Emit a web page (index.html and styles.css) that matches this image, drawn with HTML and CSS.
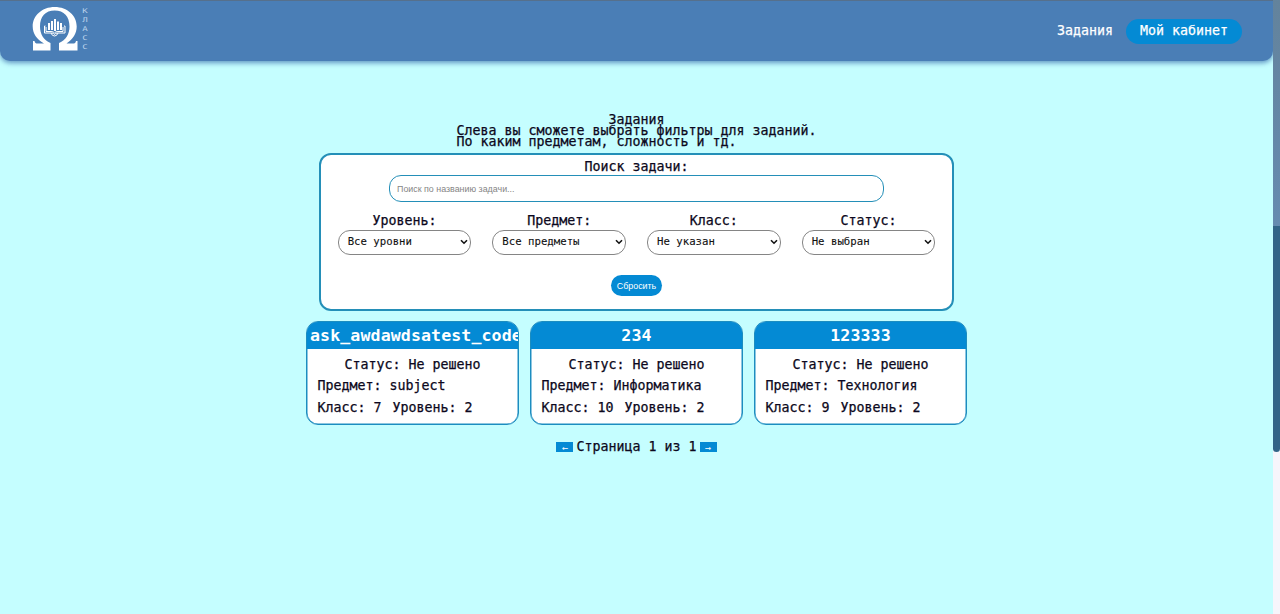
FILE: index.html
```html
<!DOCTYPE html>
<html lang="ru">
<head>
<meta charset="utf-8">
<title>Задания</title>
<link rel="stylesheet" href="styles.css">
</head>
<body>
<div class="page">
  <header class="header">
    <a class="logo">
      <svg class="omega" viewBox="0 0 46 44" width="46" height="44">
        <path fill="#fff" d="M1 43.500V34h1.500C3 36 3.500 36.500 6 36.500H12C4.500 32 .7 26.500 .7 19.500C.7 8.500 10 0 22.700 0S44.700 8.500 44.700 19.500C44.700 26.500 41 32 34.500 36.500H40.500C43 36.500 43.500 36 44 34H45.500V43.500H27V36C34 33 37.500 27 37.500 19.500C37.500 9.500 32 3.500 22.700 3.500S8 9.500 8 19.500C8 27 11.500 33 18.500 36V43.500Z"/>
        <path fill="#fff" d="M16 16h2v7h-2zM19 14h2v9h-2zM22 12h2v12h-2zM25 14.500h2v8.500h-2zM28 16h2v7h-2z"/>
        <path fill="none" stroke="#fff" stroke-width="1" d="M13.500 19h-1v7h7q2 0 3 1.500q1-1.500 3-1.500h7.500v-7h-1M14 20v4.500h5q2.500 0 3.500 1.500q1-1.500 3.500-1.500h5V20M19 26q1 3 3.500 3t3.500-3"/>
      </svg>
      <span class="logo-word"><i>К</i><i>Л</i><i>А</i><i>С</i><i>С</i></span>
    </a>
    <nav class="nav"><a>Задания</a><a class="cabinet">Мой кабинет</a></nav>
  </header>
  <main class="main">
    <div class="intro"><h1>Задания</h1><p>Слева вы сможете выбрать фильтры для заданий.<br>По каким предметам, сложность и тд.</p></div>
    <form class="filters">
      <label class="search-label">Поиск задачи:</label>
      <input class="search" type="text" placeholder="Поиск по названию задачи...">
      <div class="selects">
        <div class="field"><label>Уровень:</label><div class="select">Все уровни<svg width="8" height="6" viewBox="0 0 8 6"><path d="M1 1.200 4 4.200 7 1.200"/></svg></div></div>
        <div class="field"><label>Предмет:</label><div class="select">Все предметы<svg width="8" height="6" viewBox="0 0 8 6"><path d="M1 1.200 4 4.200 7 1.200"/></svg></div></div>
        <div class="field"><label>Класс:</label><div class="select">Не указан<svg width="8" height="6" viewBox="0 0 8 6"><path d="M1 1.200 4 4.200 7 1.200"/></svg></div></div>
        <div class="field"><label>Статус:</label><div class="select">Не выбран<svg width="8" height="6" viewBox="0 0 8 6"><path d="M1 1.200 4 4.200 7 1.200"/></svg></div></div>
      </div>
      <button class="reset" type="button">Сбросить</button>
    </form>
    <section class="cards">
      <article class="card"><h2><span>ask_awdawdsatest_code</span></h2><div class="info"><p class="status">Статус: Не решено</p><p>Предмет: subject</p><p class="pair"><span>Класс: 7</span><span>Уровень: 2</span></p></div></article>
      <article class="card"><h2><span>234</span></h2><div class="info"><p class="status">Статус: Не решено</p><p>Предмет: Информатика</p><p class="pair"><span>Класс: 10</span><span>Уровень: 2</span></p></div></article>
      <article class="card"><h2><span>123333</span></h2><div class="info"><p class="status">Статус: Не решено</p><p>Предмет: Технология</p><p class="pair"><span>Класс: 9</span><span>Уровень: 2</span></p></div></article>
    </section>
    <div class="pager"><button type="button">←</button><span>Страница 1 из 1</span><button type="button">→</button></div>
  </main>
</div>
<div class="scrollbar"><div class="thumb"></div></div>
</body>
</html>
```
FILE: styles.css
```css
* { box-sizing: border-box; }
body {
  margin: 0;
  height: 614px;
  display: flex;
  overflow: hidden;
  background: #c5feff;
  color: #0c0820;
  font: 13.300px/16px "DejaVu Sans Mono", monospace;
  -webkit-text-stroke: 0.25px currentColor;
}
h1, h2, p { margin: 0; font: inherit; }
.page { width: 1273px; }
.header {
  height: 61px;
  padding: 0 31px 0 32px;
  display: flex;
  align-items: center;
  justify-content: space-between;
  background: #4a7eb6;
  border-top: 1px solid #56708c;
  border-radius: 0 0 10px 10px;
  box-shadow: 0 2px 5px #4a7eb6d0;
  color: #fff;
}
.logo { display: flex; gap: 5px; margin-top: -3px; }
.omega { display: block; }
.logo-word { display: flex; flex-direction: column; color: #b9d0ea; -webkit-text-stroke: 0; }
.logo-word i { font: 6.500px/9px "DejaVu Sans Mono", monospace; transform: scaleX(1.400); }
.nav { display: flex; align-items: center; gap: 13px; }
.cabinet {
  height: 25px;
  padding: 0 14px;
  line-height: 24px;
  border-radius: 13px;
  background: #048ad4;
}
.main { padding-top: 53px; display: flex; flex-direction: column; align-items: center; }
.intro { line-height: 11px; }
.intro h1 { text-align: center; }
.filters {
  width: 635px;
  height: 158px;
  margin-top: 6px;
  padding-top: 4px;
  border: 2px solid #248fb8;
  border-radius: 12px;
  background: #fff;
  display: flex;
  flex-direction: column;
  align-items: center;
}
.search-label { height: 16px; }
.search {
  width: 495px;
  height: 27px;
  padding: 0 7px;
  border: 1px solid #248fb8;
  border-radius: 12px;
  outline: none;
  font: 8.900px "Liberation Sans", sans-serif;
  -webkit-text-stroke: 0;
}
.search::placeholder { color: #858585; }
.selects { display: flex; gap: 21px; margin-top: 11px; }
.field { width: 133.700px; text-align: center; }
.field label { display: block; height: 17px; }
.select {
  height: 25px;
  padding: 0 2px 2px 9px;
  display: flex;
  align-items: center;
  justify-content: space-between;
  border: 1px solid #858585;
  border-radius: 12px;
  font-size: 10.700px;
  color: #111;
  -webkit-text-stroke: 0.1px;
}
.select svg { fill: none; stroke: #111; stroke-width: 1.600; }
.reset {
  width: 51px;
  height: 21px;
  margin-top: 20px;
  padding: 0;
  border: 0;
  border-radius: 11px;
  background: #048ad4;
  color: #fff;
  font: 8.900px "Liberation Sans", sans-serif;
  -webkit-text-stroke: 0;
}
.cards { display: flex; gap: 11px; margin-top: 10px; }
.card {
  width: 213px;
  height: 104px;
  border: 1px solid #1c8dc0;
  border-radius: 12px;
  overflow: hidden;
  background: #fff;
  box-shadow: inset 0 0 0 0.5px #1c8dc0;
}
.card h2 {
  height: 27px;
  display: flex;
  justify-content: center;
  background: #048ad4;
  color: #fff;
  font: bold 16.600px/27px "DejaVu Sans Mono", monospace;
  -webkit-text-stroke: 0;
  letter-spacing: 0.1px;
}
.card:first-child h2 { justify-content: flex-start; padding-left: 3px; }
.info { padding: 8px 10.500px 0; }
.info p { height: 21.300px; }
.info .status { text-align: center; }
.info .pair { display: flex; gap: 11px; }
.pager { display: flex; align-items: center; gap: 3px; margin-top: 14px; }
.pager button {
  width: 17px;
  height: 10px;
  padding: 0;
  border: 0;
  background: #048ad4;
  color: #fff;
  font: 9px/10px "Liberation Sans", sans-serif;
}
.scrollbar { width: 7px; background: #f6f5fb; }
.thumb {
  height: 452px;
  border-radius: 0 0 4px 4px;
  background: linear-gradient(#63839c 0, #668bb0 226px, #326487 226px);
}
```
